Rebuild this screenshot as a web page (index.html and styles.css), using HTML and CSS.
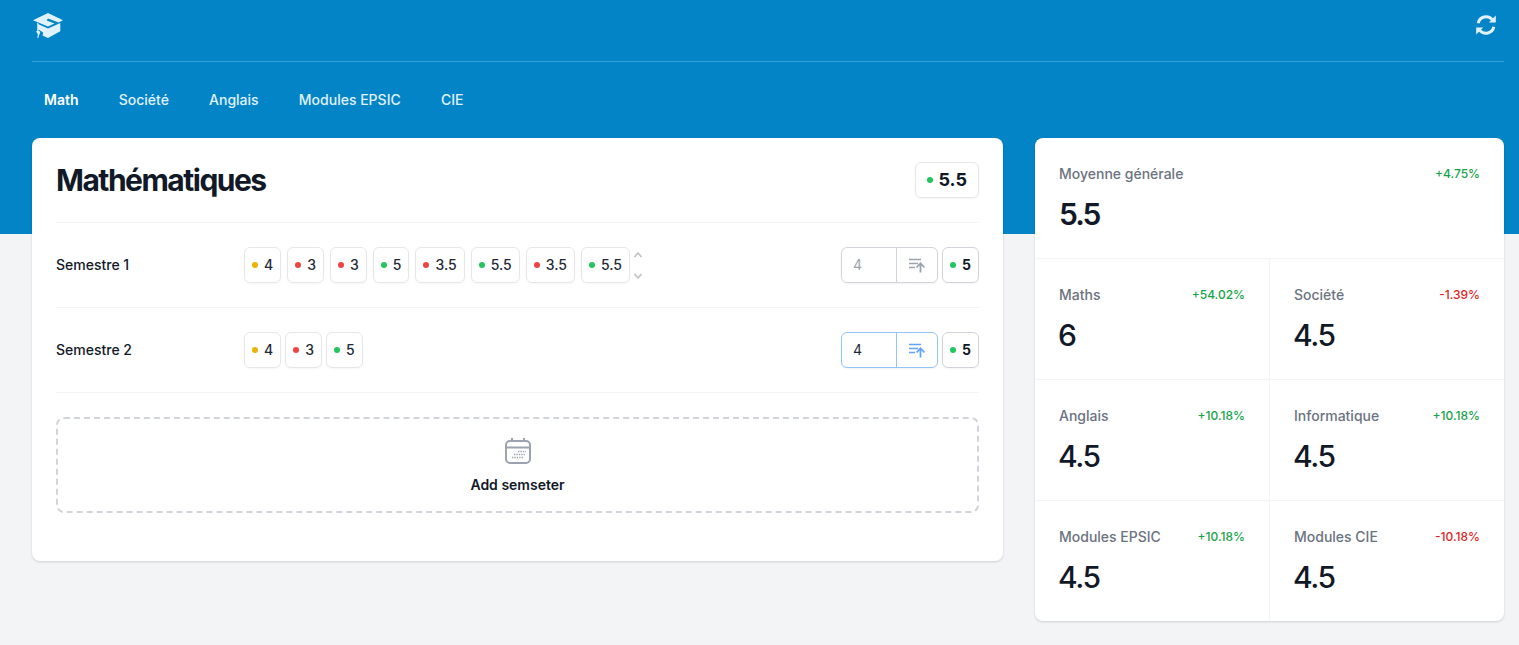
FILE: index.html
```html
<!DOCTYPE html>
<html lang="fr">
<head>
<meta charset="utf-8">
<title>Notes</title>
<link rel="stylesheet" href="styles.css">
</head>
<body>
<header class="hero">
  <div class="topbar">
    <svg class="logo" viewBox="0 0 30 26" width="30" height="26" fill="#e0f2fe"><path d="M15 0 30 7.200 25.600 9.400 15 5.600 13.600 7.600 21.500 10.500 15 13.600 0 7.200Z"/><path d="M5 11 15 15.600 27.300 9.900V18.200L15 25 9.500 22.400 10.200 19.800 8.300 18.300 5 16.500Z"/><path d="M4.200 9.500 5.400 10.200 5.400 17.600 7.400 19 6 22.500 5.200 25 4.300 25 4.900 21.500 3.200 18.400 4.200 17.400Z"/></svg>
    <svg class="refresh" viewBox="0 0 22 22" width="22" height="22" fill="none" stroke="#e0f2fe" stroke-width="3"><path d="M3.200 9.200A8 8 0 0 1 17.200 5.600"/><path d="M18.800 12.800A8 8 0 0 1 4.800 16.400"/><path d="M20.800 1.400V8.400H13.800Z" fill="#e0f2fe" stroke="none"/><path d="M1.200 20.600V13.600H8.200Z" fill="#e0f2fe" stroke="none"/></svg>
  </div>
  <nav class="tabs">
    <a class="tab tab-active">Math</a>
    <a class="tab">Société</a>
    <a class="tab">Anglais</a>
    <a class="tab">Modules EPSIC</a>
    <a class="tab">CIE</a>
  </nav>
</header>
<main class="layout">
  <section class="card subject">
    <div class="subject-head">
      <h1 class="subject-title">Mathématiques</h1>
      <span class="pill pill-big"><i class="dot green"></i>5.5</span>
    </div>
    <div class="semester">
      <div class="semester-name">Semestre 1</div>
      <div class="grades">
        <span class="pill"><i class="dot yellow"></i>4</span>
        <span class="pill"><i class="dot red"></i>3</span>
        <span class="pill"><i class="dot red"></i>3</span>
        <span class="pill"><i class="dot green"></i>5</span>
        <span class="pill"><i class="dot red"></i>3.5</span>
        <span class="pill"><i class="dot green"></i>5.5</span>
        <span class="pill"><i class="dot red"></i>3.5</span>
        <span class="pill"><i class="dot green"></i>5.5</span>
        <span class="spinner">
          <svg viewBox="0 0 10 7" width="10" height="7" fill="none" stroke="#c4c4c4" stroke-width="1.800"><path d="M1.500 6 5 2 8.500 6"/></svg>
          <svg viewBox="0 0 10 7" width="10" height="7" fill="none" stroke="#c4c4c4" stroke-width="1.800"><path d="M1.500 1 5 5 8.500 1"/></svg>
        </span>
      </div>
      <div class="entry">
        <span class="entry-input muted">4</span>
        <span class="entry-btn"><svg viewBox="0 0 18 15" width="18" height="15" fill="none" stroke="currentColor" stroke-width="1.500"><path d="M1 1.500H13M1 5.500H10M1 9.500H7"/><path d="M12.500 14.500V6M8.500 9.500 12.500 5.300 16.500 9.500" stroke-width="1.800"/></svg></span>
      </div>
      <span class="pill pill-strong"><i class="dot green"></i>5</span>
    </div>
    <div class="semester">
      <div class="semester-name">Semestre 2</div>
      <div class="grades grades-tight">
        <span class="pill"><i class="dot yellow"></i>4</span>
        <span class="pill"><i class="dot red"></i>3</span>
        <span class="pill"><i class="dot green"></i>5</span>
      </div>
      <div class="entry entry-focus">
        <span class="entry-input">4</span>
        <span class="entry-btn"><svg viewBox="0 0 18 15" width="18" height="15" fill="none" stroke="currentColor" stroke-width="1.500"><path d="M1 1.500H13M1 5.500H10M1 9.500H7"/><path d="M12.500 14.500V6M8.500 9.500 12.500 5.300 16.500 9.500" stroke-width="1.800"/></svg></span>
      </div>
      <span class="pill pill-strong"><i class="dot green"></i>5</span>
    </div>
    <div class="add">
      <svg viewBox="0 0 26 26" width="26" height="26" fill="none" stroke="#9ca3af" stroke-width="2"><rect x="1" y="3" width="24" height="22" rx="4"/><path d="M1 9.500H25M7 0V3M19 0V3"/><path d="M13 13.500H21M9 16.500H21M7 19.500H18" stroke-width="1.500" stroke-dasharray="1.400 1"/></svg>
      <span class="add-label">Add semseter</span>
    </div>
  </section>
  <aside class="card stats">
    <div class="stat stat-wide">
      <div class="stat-head"><span>Moyenne générale</span><em class="up">+4.75%</em></div>
      <div class="stat-value stat-main">5.5</div>
    </div>
    <div class="stat">
      <div class="stat-head"><span>Maths</span><em class="up">+54.02%</em></div>
      <div class="stat-value">6</div>
    </div>
    <div class="stat">
      <div class="stat-head"><span>Société</span><em class="down">-1.39%</em></div>
      <div class="stat-value">4.5</div>
    </div>
    <div class="stat">
      <div class="stat-head"><span>Anglais</span><em class="up">+10.18%</em></div>
      <div class="stat-value">4.5</div>
    </div>
    <div class="stat">
      <div class="stat-head"><span>Informatique</span><em class="up">+10.18%</em></div>
      <div class="stat-value">4.5</div>
    </div>
    <div class="stat">
      <div class="stat-head"><span>Modules EPSIC</span><em class="up">+10.18%</em></div>
      <div class="stat-value">4.5</div>
    </div>
    <div class="stat">
      <div class="stat-head"><span>Modules CIE</span><em class="down">-10.18%</em></div>
      <div class="stat-value">4.5</div>
    </div>
  </aside>
</main>
</body>
</html>
```
FILE: styles.css
```css
* { box-sizing: border-box; }
html, body { margin: 0; height: 100%; overflow: hidden; }
body {
  background: #f3f4f6;
  color: #111827;
  font-family: Inter, "Liberation Sans", sans-serif;
  font-size: 14px;
  line-height: 20px;
}
.hero {
  background: #0284c7;
  height: 234px;
  padding: 0 15px 0 32px;
}
.topbar {
  display: flex;
  justify-content: space-between;
  align-items: flex-start;
  height: 62px;
  padding: 13px 7px 0 1px;
  border-bottom: 1px solid #38a0d8;
}
.refresh { margin-top: 1px; }
.tabs {
  display: flex;
  gap: 16.2px;
  padding-top: 28px;
}
.tab {
  padding: 0 12px;
  color: #e0f2fe;
  font-weight: 500;
}
.tab-active { color: #fff; font-weight: 600; }
.layout {
  display: grid;
  grid-template-columns: 971px 469px;
  gap: 32px;
  align-items: start;
  margin: -96px 0 0 32px;
}
.card {
  background: #fff;
  border-radius: 8px;
  box-shadow: 0 1px 3px rgba(0,0,0,.1), 0 1px 2px rgba(0,0,0,.06);
}
.subject { padding: 24px 24px 48px; }
.subject-head {
  display: flex;
  justify-content: space-between;
  align-items: flex-start;
  height: 61px;
  border-bottom: 1px solid #f3f4f6;
}
.subject-title {
  margin: 0;
  font-size: 30px;
  line-height: 36px;
  font-weight: 700;
  letter-spacing: -1.5px;
}
.semester {
  display: flex;
  align-items: center;
  height: 85px;
  border-bottom: 1px solid #f3f4f6;
}
.semester-name { width: 188px; font-weight: 500; }
.grades {
  display: flex;
  align-items: center;
  gap: 6px;
  flex: 1;
}
.grades-tight { gap: 4px; }
.pill {
  display: inline-flex;
  align-items: center;
  gap: 6px;
  height: 36px;
  padding: 0 7px;
  border: 1px solid #e5e7eb;
  border-radius: 6px;
  font-weight: 500;
  color: #1f2937;
  box-shadow: 0 1px 2px rgba(0,0,0,.04);
}
.pill-big {
  padding: 0 11px;
  font-size: 18px;
  font-weight: 700;
  color: #111827;
}
.pill-strong {
  margin-left: 4px;
  border-color: #d1d5db;
  font-weight: 700;
  color: #111827;
}
.dot {
  width: 6px;
  height: 6px;
  border-radius: 50%;
}
.green { background: #22c55e; }
.red { background: #ef4444; }
.yellow { background: #eab308; }
.spinner {
  display: flex;
  flex-direction: column;
  gap: 15px;
  margin-left: -3px;
}
.entry {
  display: flex;
  width: 97px;
  height: 36px;
  border: 1px solid #d1d5db;
  border-radius: 6px;
  box-shadow: 0 1px 2px rgba(0,0,0,.05);
}
.entry-input {
  width: 54px;
  padding-left: 11px;
  line-height: 34px;
  color: #1f2937;
}
.muted { color: #9ca3af; }
.entry-btn {
  display: flex;
  flex: 1;
  align-items: center;
  justify-content: center;
  border-left: 1px solid #d1d5db;
  color: #9ca3af;
}
.entry-focus { border-color: #93c5fd; }
.entry-focus .entry-btn { border-left-color: #93c5fd; color: #60a5fa; }
.add {
  display: flex;
  flex-direction: column;
  align-items: center;
  gap: 11px;
  height: 96px;
  margin-top: 24px;
  padding-top: 19px;
  border: 2px dashed #d1d5db;
  border-radius: 8px;
}
.add-label { font-weight: 600; }
.stats {
  display: grid;
  grid-template-columns: 235px 234px;
  overflow: hidden;
}
.stat {
  height: 121px;
  padding: 26px 24px 0;
  border-top: 1px solid #f3f4f6;
}
.stat:nth-child(2n) { border-right: 1px solid #f3f4f6; }
.stat-wide {
  grid-column: 1 / -1;
  height: 120px;
  border: 0;
}
.stat-head {
  display: flex;
  justify-content: space-between;
  align-items: center;
  color: #6b7280;
  font-weight: 500;
}
.stat-head em {
  font-style: normal;
  font-size: 12px;
  font-weight: 500;
}
.up { color: #16a34a; }
.down { color: #dc2626; }
.stat-value {
  margin: 12px 0 0 -1px;
  font-size: 30px;
  line-height: 36px;
  font-weight: 500;
  letter-spacing: -1.5px;
}
.stat-main {
  margin-left: 0;
  font-weight: 600;
  letter-spacing: -2px;
}
```
